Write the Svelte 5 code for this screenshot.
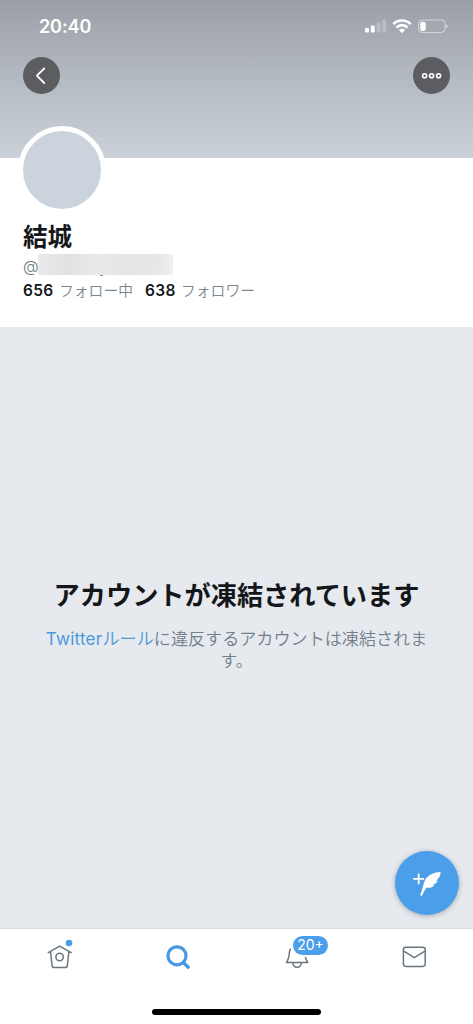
<script>
  const stats = [
    { count: '656', label: 'フォロー中' },
    { count: '638', label: 'フォロワー' }
  ];
</script>

<div class="screen">
  <header>
    <div class="status">
      <span class="time">20:40</span>
      <svg width="84" height="16" viewBox="0 0 84 16" fill="#fff">
        <rect x="1" y="10" width="4" height="4.5" rx="1.2" />
        <rect x="6.8" y="7.5" width="4" height="7" rx="1.2" />
        <rect x="12.6" y="4.5" width="4" height="10" rx="1.2" opacity=".25" />
        <rect x="18.2" y="1.5" width="4" height="13" rx="1.2" opacity=".25" />
        <g fill="none" stroke="#fff" stroke-width="2.6">
          <path d="M29.3 6.1a12.2 12.2 0 0 1 17.4 0" />
          <path d="M32.5 9.5a7.6 7.6 0 0 1 11 0" />
        </g>
        <path d="M34.9 12a4.4 4.4 0 0 1 6.2 0L38 15.2z" />
        <rect x="54.5" y="2" width="26.5" height="12.5" rx="3.6" fill="none" stroke="#fff" stroke-opacity=".5" />
        <rect x="56.2" y="3.7" width="5.5" height="9.2" rx="2" />
        <path d="M82 6.3q1.6.6 1.6 2t-1.6 2z" opacity=".55" />
      </svg>
    </div>
    <div class="actions">
      <button aria-label="戻る">
        <svg width="37" height="37" viewBox="0 0 37 37" fill="none" stroke="#fff" stroke-width="1.8" stroke-linecap="round" stroke-linejoin="round">
          <path d="M21.2 11.5L13.9 18.7l7.3 7.3" />
        </svg>
      </button>
      <button aria-label="その他">
        <svg width="37" height="37" viewBox="0 0 37 37" fill="none" stroke="#fff" stroke-width="1.6">
          <circle cx="11.6" cy="18.7" r="2" />
          <circle cx="18.6" cy="18.7" r="2" />
          <circle cx="25.6" cy="18.7" r="2" />
        </svg>
      </button>
    </div>
  </header>

  <section class="profile">
    <div class="avatar"></div>
    <h1>結城</h1>
    <div class="handle"><span>@</span><i></i></div>
    <div class="stats">
      {#each stats as s}
        <span class="stat"><b>{s.count}</b><span>{s.label}</span></span>
      {/each}
    </div>
  </section>

  <main>
    <h2>アカウントが凍結されています</h2>
    <p><span class="link"><span class="latin">Twitter</span>ルール</span>に違反するアカウントは凍結されます。</p>
    <button class="compose" aria-label="ツイートする">
      <svg width="64" height="64" viewBox="0 0 64 64">
        <path d="M23.7 22.5v10.8M18.3 27.9h10.8" stroke="#fff" stroke-width="1.8" fill="none" />
        <path d="M45.6 21C39 21.2 33.5 23.8 30.6 28C28 32.5 27.6 38.5 25.2 44.2L26.8 45C28.4 41.6 29.7 39 31.6 36.4C34.2 37.2 37.4 36.6 39.2 34.2L37.6 33.6C39.8 33.3 41.8 32 42.8 30L41.2 29.4C44 27.4 45.8 24.6 45.6 21Z" fill="#fff" />
      </svg>
    </button>
  </main>

  <nav>
    <div class="tabs">
      <div class="tab">
        <svg width="38" height="38" viewBox="0 0 38 38" fill="none" stroke="#69767f" stroke-width="1.5" stroke-linecap="round" stroke-linejoin="round">
          <path d="M7.3 14.6L18.6 8.2l11.6 6.4M9.5 13.6l1.6 14q.2 2 2.2 2h10.8q2 0 2.2-2l1.6-14" />
          <circle cx="18.6" cy="19" r="3.7" />
          <circle cx="28" cy="5" r="3.3" fill="#4a9eea" stroke="none" />
        </svg>
      </div>
      <div class="tab">
        <svg width="38" height="38" viewBox="0 0 38 38" fill="none" stroke="#4a98e1" stroke-linecap="round">
          <circle cx="18" cy="17.8" r="9" stroke-width="3.2" />
          <path d="M24.9 25l4.4 4.2" stroke-width="3.4" />
        </svg>
      </div>
      <div class="tab">
        <svg width="38" height="38" viewBox="0 0 38 38" fill="none" stroke="#69767f" stroke-width="1.5" stroke-linecap="round" stroke-linejoin="round">
          <path d="M13.4 11.2c-1.3 2-1 4.8-1.6 7.7-.4 2.2-1.4 4-2.3 5.6h21.2c-1-1.6-1.8-3.4-2.2-5" />
          <path d="M15.8 24.8c.4 2.9 2 4.5 4.3 4.5s3.9-1.6 4.3-4.5" />
        </svg>
        <span class="badge">20+</span>
      </div>
      <div class="tab">
        <svg width="38" height="38" viewBox="0 0 38 38" fill="none" stroke="#69767f" stroke-width="1.5" stroke-linejoin="round">
          <rect x="8.4" y="9.2" width="21.8" height="19.2" rx="2.3" />
          <path d="M8.8 13.2l10.5 6.4 10.6-6.4" />
        </svg>
      </div>
    </div>
    <div class="home"></div>
  </nav>
</div>

<style>
  :global(body) { margin: 0; }
  .screen {
    width: 473px;
    height: 1024px;
    display: flex;
    flex-direction: column;
    overflow: hidden;
    background: #fff;
    color: #14171a;
    font-family: Inter, "Noto Sans CJK JP", sans-serif;
  }
  svg { display: block; }
  button { border: 0; padding: 0; }
  header {
    height: 158px;
    flex: none;
    box-sizing: border-box;
    background: linear-gradient(#9b9ea7, #b4bac2 50%, #cad1d8);
  }
  .status {
    height: 57px;
    box-sizing: border-box;
    padding: 17px 25px 0 39px;
    display: flex;
    justify-content: space-between;
  }
  .time { font-size: 18px; line-height: 19px; font-weight: 600; color: #fff; letter-spacing: -.1px; }
  .status svg { margin-top: 1px; }
  .actions { display: flex; justify-content: space-between; padding: 0 23px; }
  .actions button {
    width: 37px;
    height: 37px;
    border-radius: 50%;
    background: #5b5d60;
  }
  .profile {
    height: 169px;
    flex: none;
    display: flex;
    flex-direction: column;
    padding-left: 23px;
  }
  .avatar {
    width: 78px;
    height: 78px;
    flex: none;
    border: 5px solid #fff;
    border-radius: 50%;
    background: #cbd4dc;
    margin: -32px 0 0 -5px;
  }
  h1 {
    margin: 5px 0 0;
    font-size: 24.5px;
    line-height: 36px;
    height: 36px;
    font-weight: 700;
  }
  .handle { display: flex; height: 25px; color: #697882; font-size: 16px; line-height: 22px; }
  .handle span { width: 15px; font-weight: 300; }
  .handle i {
    position: relative;
    width: 135px;
    height: 21px;
    margin-top: -1px;
    background: linear-gradient(100deg, #ebebec, #e0e1e3 22%, #e8e9ea 42%, #e4e5e7 65%, #e6e7e8 88%, #f1f2f3);
  }
  .handle i::after {
    content: "";
    position: absolute;
    left: 62px;
    top: 21px;
    width: 3px;
    height: 1px;
    background: #8b969e;
  }
  .stats { display: flex; gap: 12px; height: 22px; line-height: 22px; }
  .stat { display: flex; gap: 5px; }
  .stat b { width: 31px; font-size: 15.5px; font-weight: 600; letter-spacing: .3px; }
  .stat > span { font-size: 14.8px; color: #7a8790; font-weight: 350; }
  main {
    position: relative;
    height: 601px;
    flex: none;
    box-sizing: border-box;
    padding: 250px 36px 0;
    background: #e6e9ed;
    text-align: center;
  }
  h2 { margin: 0; font-size: 26.2px; line-height: 38px; font-weight: 700; white-space: nowrap; }
  p { margin: 13px 0 0; font-size: 17.1px; line-height: 22.2px; font-weight: 350; color: #71808b; }
  .link { color: #4a98dc; }
  .latin { font-weight: 400; letter-spacing: .25px; }
  .compose {
    position: absolute;
    right: 14px;
    bottom: 13px;
    width: 64px;
    height: 64px;
    border-radius: 50%;
    background: #4a9eea;
    box-shadow: 0 1px 5px rgba(60, 80, 100, .4);
  }
  nav {
    flex: 1;
    box-sizing: border-box;
    border-top: 1px solid #d7dce0;
    background: #fff;
  }
  .tabs { display: flex; height: 80px; padding-left: 1px; }
  .tab { position: relative; flex: 1; display: flex; justify-content: center; padding-top: 9px; }
  .badge {
    position: absolute;
    left: 56px;
    top: 7px;
    width: 35px;
    height: 19px;
    border-radius: 10px;
    background: #4a9eea;
    color: #fff;
    font-size: 14px;
    line-height: 18px;
    text-align: center;
  }
  .home { width: 169px; height: 6px; border-radius: 3px; background: #000; margin: 0 auto; }
</style>
